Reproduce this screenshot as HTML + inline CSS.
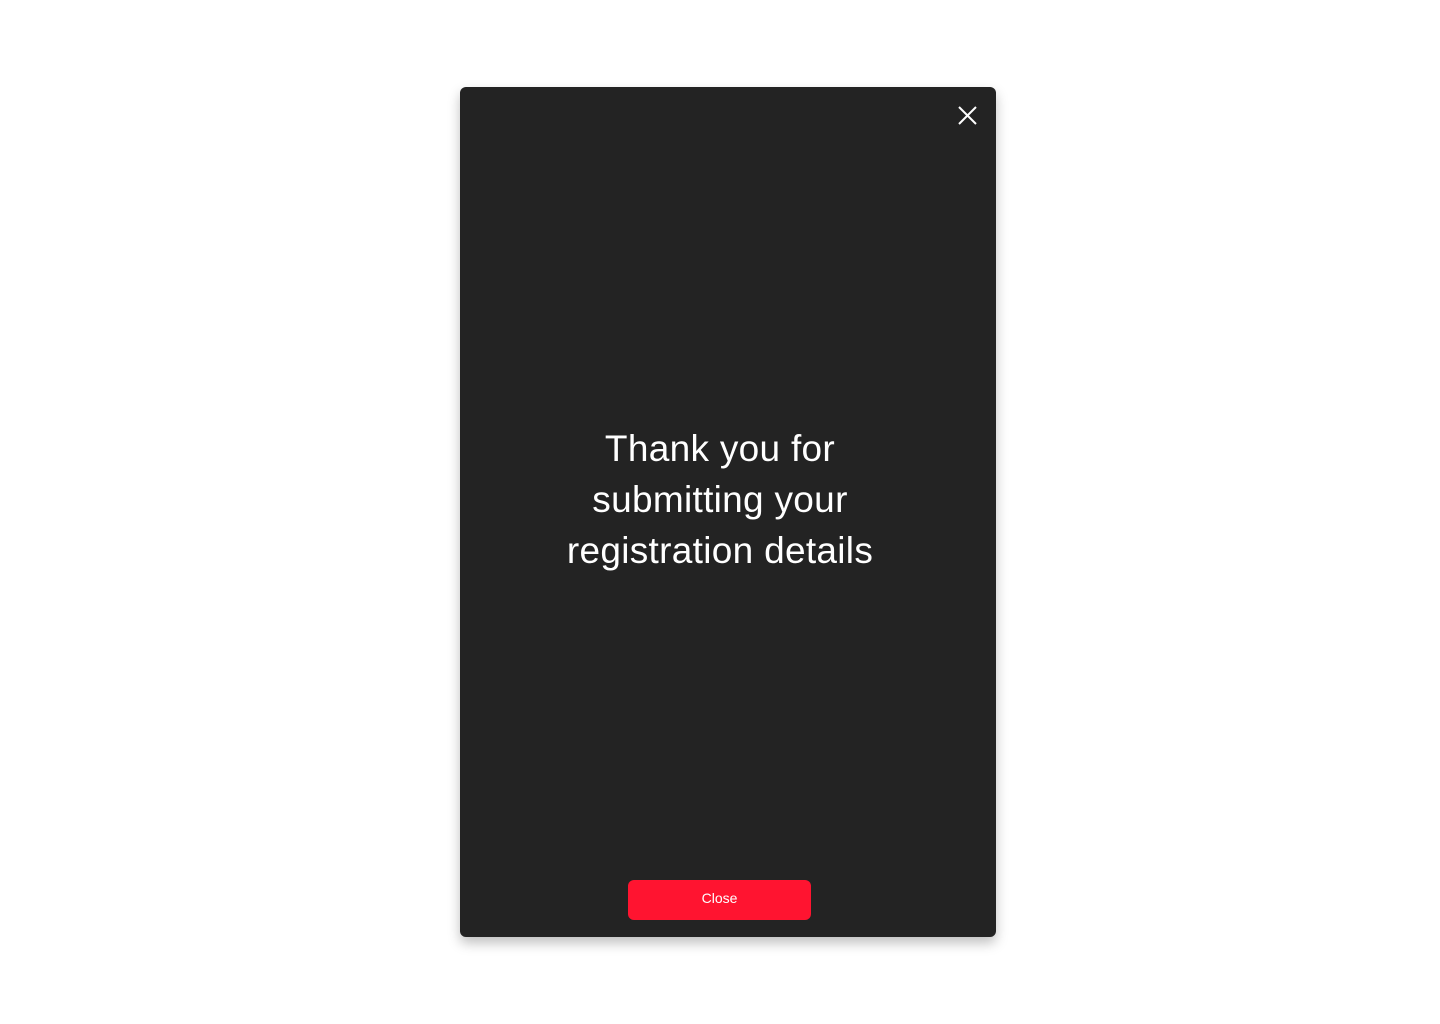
<!DOCTYPE html>
<html><head><style>
html,body{margin:0;padding:0;width:1440px;height:1024px;background:#fff;overflow:hidden}
.card{position:absolute;left:460px;top:87px;width:536px;height:850px;background:#232323;border-radius:6px;box-shadow:0 6px 12px rgba(0,0,0,0.25)}
.x{position:absolute;left:957px;top:105px}
.msg{position:absolute;left:460px;width:520px;top:423px;text-align:center;color:#fff;font-family:"Liberation Sans",sans-serif;font-size:37px;line-height:51px;letter-spacing:0.3px}
.btn{position:absolute;left:628px;top:880px;width:183px;height:40px;background:#ff1430;border-radius:6px;color:#fff;font-family:"Liberation Sans",sans-serif;font-size:14px;text-align:center;line-height:36px}
</style></head><body>
<div class="card"></div>
<svg class="x" width="21" height="21" viewBox="0 0 21 21"><path d="M2 2L19 19M19 2L2 19" stroke="#fff" stroke-width="2"/></svg>
<div class="msg">Thank you for<br>submitting your<br>registration details</div>
<div class="btn">Close</div>
</body></html>
